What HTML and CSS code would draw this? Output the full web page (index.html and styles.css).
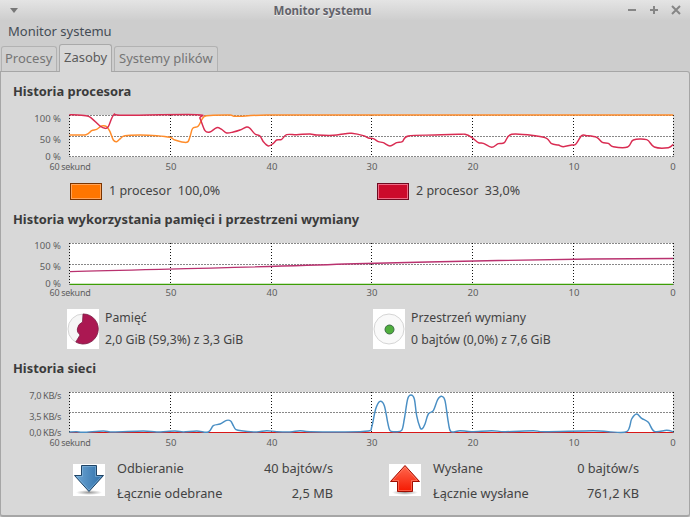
FILE: index.html
```html
<!DOCTYPE html>
<html lang="pl">
<head>
<meta charset="utf-8">
<title>Monitor systemu</title>
<link rel="stylesheet" href="styles.css">
</head>
<body>
<div class="window">
  <header class="titlebar">
    <svg class="win-menu" width="8" height="5" viewBox="0 0 8 5"><path d="M0 0h8L4 5z" fill="#777"/></svg>
    <span class="win-title">Monitor systemu</span>
    <div class="win-buttons">
      <svg width="10" height="10" viewBox="0 0 10 10"><path d="M1 5h8" stroke="#868686" stroke-width="2"/></svg>
      <svg width="10" height="10" viewBox="0 0 10 10"><path d="M1 5h8M5 1v8" stroke="#868686" stroke-width="2"/></svg>
      <svg width="10" height="10" viewBox="0 0 10 10"><path d="M1 1l8 8M9 1l-8 8" stroke="#868686" stroke-width="2"/></svg>
    </div>
  </header>
  <nav class="menubar">Monitor systemu</nav>
  <div class="tabs">
    <div class="tab tab-first">Procesy</div>
    <div class="tab tab-active">Zasoby</div>
    <div class="tab">Systemy plików</div>
  </div>
  <main class="pane">
    <h2 class="heading heading-first">Historia procesora</h2>
    <svg class="chart" width="688" height="68" viewBox="1 0 688 68">
      <rect class="plot" x="70" y="10" width="603" height="42"/>
      <g class="grid">
        <path d="M69.5 10.5H673.5M69.5 31.5H673.5M69.5 51.5H673.5M69.5 10V52M170.5 10V52M271.5 10V52M371.5 10V52M472.5 10V52M573.5 10V52M673.5 10V52"/>
      </g>
      <g class="curves" transform="translate(0 -105) scale(.33333)">
        <path class="curve cpu1" data-points="208,405 258,404 275,392 290,388 305,378 320,380 330,395 340,420 350,425 362,415 375,407 420,405 470,407 510,412 525,420 560,427 570,410 578,385 595,378 612,350 640,346 690,345 710,349 800,345 1000,345 1380,345 2020,345"/>
        <path class="curve cpu2" data-points="208,344 258,347 275,355 300,378 315,385 325,380 342,344 370,346 590,344 600,355 615,392 630,396 650,383 665,388 680,399 700,396 720,390 740,381 750,385 765,402 780,408 790,425 805,438 820,430 830,420 845,418 860,404 890,404 930,402 950,405 1000,406 1035,401 1055,400 1090,407 1105,414 1120,416 1135,425 1150,428 1170,438 1190,428 1207,425 1225,408 1305,405 1375,403 1395,403 1415,412 1435,428 1450,430 1475,442 1495,431 1513,428 1535,403 1610,408 1640,415 1655,431 1675,435 1690,440 1715,435 1727,433 1745,407 1760,407 1790,412 1807,427 1825,430 1840,440 1883,441 1900,420 1940,419 1963,441 2005,443 2020,433"/>
      </g>
      <g class="labels">
        <text class="y" x="61" y="17">100 %</text><text class="y" x="61" y="38">50 %</text><text class="y" x="61" y="55">0 %</text>
        <text class="x x-first" x="70" y="65">60 sekund</text><text class="x" x="171" y="65">50</text><text class="x" x="272" y="65">40</text><text class="x" x="372" y="65">30</text><text class="x" x="473" y="65">20</text><text class="x" x="574" y="65">10</text><text class="x" x="673" y="65">0</text>
      </g>
    </svg>
    <div class="legend">
      <div class="legend-item"><span class="swatch swatch-orange"></span><span class="legend-text">1 procesor&nbsp; 100,0%</span></div>
      <div class="legend-item"><span class="swatch swatch-red"></span><span class="legend-text">2 procesor&nbsp; 33,0%</span></div>
    </div>

    <h2 class="heading">Historia wykorzystania pamięci i przestrzeni wymiany</h2>
    <svg class="chart" width="688" height="68" viewBox="1 0 688 68">
      <rect class="plot" x="70" y="10" width="603" height="42"/>
      <g class="grid">
        <path d="M69.5 10.5H673.5M69.5 31.5H673.5M69.5 51.5H673.5M69.5 10V52M170.5 10V52M271.5 10V52M371.5 10V52M472.5 10V52M573.5 10V52M673.5 10V52"/>
      </g>
      <path class="mem-line" d="M70 38.7C170 36 270 34 345 31C450 28 560 26 673 25.5"/>
      <path class="swap-line" d="M70 51.3H673"/>
      <g class="labels">
        <text class="y" x="61" y="16">100 %</text><text class="y" x="61" y="37">50 %</text><text class="y" x="61" y="54">0 %</text>
        <text class="x x-first" x="70" y="63">60 sekund</text><text class="x" x="171" y="63">50</text><text class="x" x="272" y="63">40</text><text class="x" x="372" y="63">30</text><text class="x" x="473" y="63">20</text><text class="x" x="574" y="63">10</text><text class="x" x="673" y="63">0</text>
      </g>
    </svg>
    <div class="usage">
      <div class="usage-item">
        <svg class="usage-icon" width="32" height="40" viewBox="0 0 32 40">
          <rect width="32" height="40" fill="#fff"/>
          <circle cx="16" cy="20" r="15" fill="#f6f6f6" stroke="#d5d5d5"/>
          <path d="M16 5A15 15 0 1 1 8.8 33L13 26Q9.5 23 10.3 20Q11 15 15.5 13Z" fill="#ab1852" stroke="#7d1f47" stroke-width=".8"/>
        </svg>
        <div class="usage-text"><div>Pamięć</div><div>2,0 GiB (59,3%) z 3,3 GiB</div></div>
      </div>
      <div class="usage-item">
        <svg class="usage-icon" width="32" height="40" viewBox="0 0 32 40">
          <rect width="32" height="40" fill="#fff"/>
          <circle cx="16" cy="20" r="15" fill="#f9f9f9" stroke="#d5d5d5"/>
          <circle cx="16.5" cy="20.5" r="4.5" fill="#4fae3c" stroke="#3b6b45" stroke-width="1"/>
        </svg>
        <div class="usage-text"><div>Przestrzeń wymiany</div><div>0 bajtów (0,0%) z 7,6 GiB</div></div>
      </div>
    </div>

    <h2 class="heading">Historia sieci</h2>
    <svg class="chart" width="688" height="68" viewBox="1 0 688 68">
      <rect class="plot" x="70" y="10" width="603" height="41"/>
      <g class="grid">
        <path d="M69.5 10.5H673.5M69.5 30.5H673.5M69.5 50.5H673.5M69.5 10V51M170.5 10V51M271.5 10V51M371.5 10V51M472.5 10V51M573.5 10V51M673.5 10V51"/>
      </g>
      <path class="net-out" d="M70 50.5H673"/>
      <g transform="translate(0 -23) scale(.33333)">
        <path class="curve net-in" data-points="208,219 230,218 250,220 310,216 340,219 430,216 470,219 525,216 550,219 590,216 625,219 640,200 660,195 680,184 692,186 700,200 708,212 730,216 770,219 800,215 830,218 870,219 900,215 930,218 1035,219 1105,216 1115,205 1127,150 1140,127 1153,140 1163,190 1170,215 1185,218 1205,214 1213,180 1223,120 1233,108 1243,120 1250,170 1260,205 1267,209 1275,195 1285,165 1300,155 1313,122 1325,112 1335,125 1345,190 1353,218 1380,215 1415,218 1475,215 1515,218 1600,215 1635,218 1780,215 1825,218 1880,218 1895,180 1910,165 1925,178 1945,190 1963,217 2000,214 2020,218"/>
      </g>
      <g class="labels">
        <text class="y y-net" x="61" y="17">7,0 KB/s</text><text class="y y-net" x="61" y="38">3,5 KB/s</text><text class="y y-net" x="61" y="54">0,0 KB/s</text>
        <text class="x x-first" x="70" y="64">60 sekund</text><text class="x" x="171" y="64">50</text><text class="x" x="272" y="64">40</text><text class="x" x="372" y="64">30</text><text class="x" x="473" y="64">20</text><text class="x" x="574" y="64">10</text><text class="x" x="673" y="64">0</text>
      </g>
    </svg>
    <div class="network">
      <div class="net-block net-down">
        <svg class="net-icon" width="32" height="32" viewBox="0 0 32 32">
          <defs>
            <linearGradient id="blue" x1="0" y1="0" x2="1" y2="0"><stop offset="0" stop-color="#6ea6d4"/><stop offset="1" stop-color="#2d6ea8"/></linearGradient>
            <linearGradient id="redg" x1="0" y1="0" x2="0" y2="1"><stop offset="0" stop-color="#ff6a50"/><stop offset="1" stop-color="#f51800"/></linearGradient>
            <radialGradient id="shade"><stop offset="0" stop-color="#999"/><stop offset="1" stop-color="#fff"/></radialGradient>
          </defs>
          <rect width="32" height="32" fill="#fff"/>
          <ellipse cx="16" cy="28.5" rx="13" ry="2.5" fill="url(#shade)"/>
          <path d="M8.5 1.5H23.5V11.5H30.5L16 27.5L1.5 11.5H8.5Z" fill="url(#blue)" stroke="#1f4466" stroke-linejoin="round"/>
          <path d="M9.5 2.5H22.5V12.5H28.2L16 26L3.8 12.5H9.5Z" fill="none" stroke="#8fbde0" stroke-opacity=".5"/>
        </svg>
        <div class="net-grid">
          <span>Odbieranie</span><span class="net-value">40 bajtów/s</span>
          <span>Łącznie odebrane</span><span class="net-value">2,5 MB</span>
        </div>
      </div>
      <div class="net-block net-up">
        <svg class="net-icon" width="32" height="32" viewBox="0 0 32 32">
          <rect width="32" height="32" fill="#fff"/>
          <ellipse cx="16" cy="28.5" rx="13" ry="2.5" fill="url(#shade)"/>
          <path d="M16 1.5L30.5 17.5H23.5V27.5H8.5V17.5H1.5Z" fill="url(#redg)" stroke="#a00c00" stroke-linejoin="round"/>
          <path d="M16 3L28.2 16.5H22.5V26.5H9.5V16.5H3.8Z" fill="none" stroke="#ff9a86" stroke-opacity=".5"/>
        </svg>
        <div class="net-grid net-grid-up">
          <span>Wysłane</span><span class="net-value">0 bajtów/s</span>
          <span>Łącznie wysłane</span><span class="net-value">761,2 KB</span>
        </div>
      </div>
    </div>
  </main>
</div>
<script src="charts.js"></script>
</body>
</html>
```

FILE: styles.css
```css
* { box-sizing: border-box; }
html, body { margin: 0; padding: 0; }
body {
  width: 690px;
  height: 517px;
  overflow: hidden;
  background: #cdcdcd;
  font-family: "Noto Sans", "Open Sans", sans-serif;
  font-size: 12.5px;
  color: #434343;
}
.window { display: flex; flex-direction: column; height: 517px; }

.titlebar {
  height: 20px;
  flex: none;
  display: flex;
  align-items: center;
  justify-content: space-between;
  padding: 0 9px 0 10px;
  background: linear-gradient(#e4e4e4, #cecece);
}
.win-menu { flex: none; }
.win-title {
  font-size: 11.5px;
  font-weight: 700;
  color: #62626a;
  text-shadow: 0 1px 0 #eee;
}
.win-buttons { display: flex; gap: 12px; }
.win-buttons svg { display: block; }

.menubar {
  height: 24px;
  flex: none;
  padding: 2px 0 0 8px;
  line-height: 18px;
  font-size: 13px;
  color: #444c55;
}

.tabs {
  height: 27px;
  flex: none;
  display: flex;
  align-items: flex-end;
  gap: 2px;
  padding-left: 1px;
  position: relative;
  z-index: 1;
}
.tab {
  height: 25px;
  padding: 0 4px;
  line-height: 23px;
  font-size: 13px;
  color: #757575;
  background: #d0d0d0;
  border: 1px solid #b2b2b2;
  border-bottom: none;
  border-radius: 3px 3px 0 0;
}
.tab-first { width: 56px; padding-left: 3px; }
.tab-active {
  height: 28px;
  margin-bottom: -1px;
  width: 53px;
  line-height: 25px;
  color: #5b5b5b;
  background: #d8d8d8;
  border-color: #a9a9a9;
}

.pane {
  flex: 1;
  background: #d8d8d8;
  border: 1px solid #a6a6a6;
  border-bottom-width: 2px;
  border-radius: 0 3px 3px 3px;
  padding-top: 10px;
}
.heading {
  margin: 0;
  padding-left: 12px;
  height: 18px;
  line-height: 18px;
  font-size: 12.9px;
  font-weight: 700;
  color: #3b3b3b;
}
.chart { display: block; margin-top: 5px; }
.plot { fill: #fff; }
.grid path { fill: none; stroke: #111; stroke-width: 1; stroke-dasharray: 1 2; }
.labels text { font-size: 9.5px; fill: #5e5e5e; font-family: "Noto Sans", sans-serif; }
.labels .y { text-anchor: end; }
.labels .x { text-anchor: middle; }
.labels .x-first { font-size: 9px; letter-spacing: -.3px; }
.labels .y-net { font-size: 9.2px; letter-spacing: -.4px; }
.curve { fill: none; stroke-width: 4.4; stroke-linejoin: round; }
.cpu1 { stroke: #ff8c2a; }
.cpu2 { stroke: #d92c52; }
.net-in { stroke: #4a8fc4; }
.mem-line { fill: none; stroke: #b9326f; stroke-width: 1.3; }
.swap-line { fill: none; stroke: #3d9e06; stroke-width: 1.2; }
.net-out { fill: none; stroke: #d81818; stroke-width: 1; }

.legend { display: flex; margin: 9px 0 0 69px; height: 18px; }
.legend-item { width: 307px; display: flex; align-items: center; gap: 7px; }
.legend-text { padding-bottom: 2px; }
.swatch {
  width: 32px;
  height: 17px;
  border: 1px solid #7a3400;
  box-shadow: inset 0 0 0 1px #ffa45a;
}
.swatch-orange { background: #ff7600; }
.swatch-red { background: #cc0a2b; border-color: #6e0a20; box-shadow: inset 0 0 0 1px #ee6a85; }

.legend + .heading { margin-top: 10px; }
.usage { display: flex; margin: 8px 0 0 66px; height: 40px; }
.usage-item { width: 306px; display: flex; gap: 6px; }
.usage-icon, .net-icon { display: block; flex: none; }
.usage-text { display: flex; flex-direction: column; justify-content: space-between; line-height: 18px; font-size: 12.25px; }
.usage + .heading { margin-top: 10px; }

.network { display: flex; margin: 14px 0 0 72px; }
.net-block { display: flex; gap: 12px; }
.net-down { width: 316px; }
.net-grid {
  width: 216px;
  margin-top: -5px;
  display: grid;
  grid-template-columns: 1fr auto;
  row-gap: 7px;
  line-height: 18px;
  font-size: 12.75px;
}
.net-grid-up { width: 206px; }
.net-value { text-align: right; }
```

FILE: charts.js
```js
// Smooths each curve's data points into a Catmull-Rom spline path.
document.querySelectorAll('path[data-points]').forEach(function (path) {
  var p = path.getAttribute('data-points').trim().split(/\s+/).map(function (s) {
    return s.split(',').map(Number);
  });
  var d = 'M' + p[0][0] + ' ' + p[0][1];
  for (var i = 0; i < p.length - 1; i++) {
    var a = p[Math.max(i - 1, 0)], b = p[i], c = p[i + 1], e = p[Math.min(i + 2, p.length - 1)];
    d += 'C' + (b[0] + (c[0] - a[0]) / 6) + ' ' + (b[1] + (c[1] - a[1]) / 6) + ' ' +
      (c[0] - (e[0] - b[0]) / 6) + ' ' + (c[1] - (e[1] - b[1]) / 6) + ' ' + c[0] + ' ' + c[1];
  }
  path.setAttribute('d', d);
});
```
